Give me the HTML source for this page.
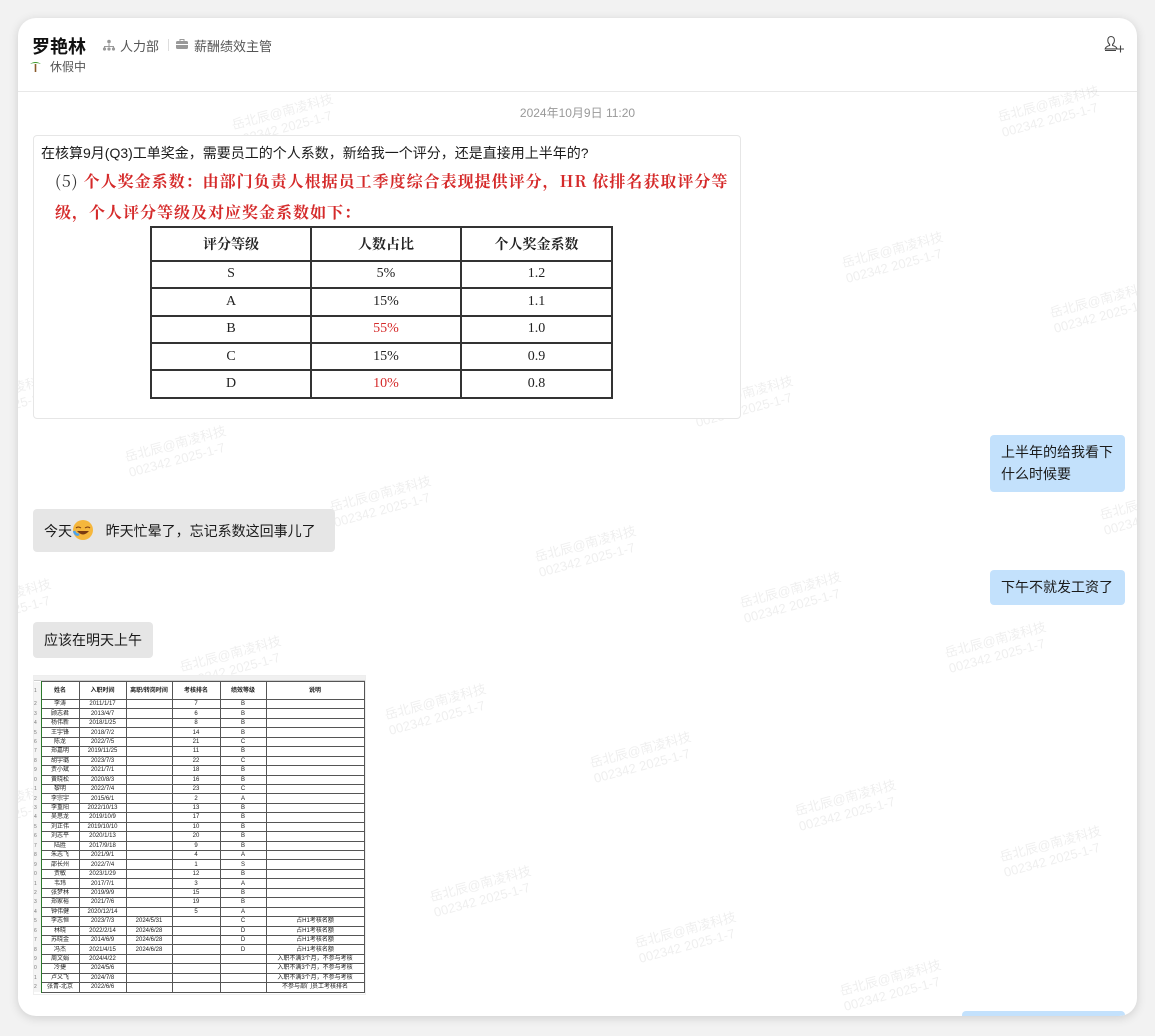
<!DOCTYPE html>
<html><head><meta charset="utf-8"><style>
*{margin:0;padding:0;box-sizing:border-box}
body{width:1155px;height:1036px;background:#f2f2f2;font-family:"Liberation Sans","Noto Sans CJK SC",sans-serif;position:relative;overflow:hidden}
#card{position:absolute;left:18px;top:18px;width:1119px;height:998px;background:#fff;border-radius:18px;box-shadow:0 2px 10px rgba(0,0,0,.15);overflow:hidden}
.abs{position:absolute}
.wm{position:absolute;color:rgba(0,0,0,.065);font-size:13px;line-height:16px;transform:rotate(-15deg);transform-origin:left top;white-space:nowrap}
.bub{position:absolute;font-size:14px;color:#1a1a1a;border-radius:4px;padding:0 11px;line-height:22px}
.g{background:#e6e6e6}.b{background:#c3e1fc}
table.t{border-collapse:collapse;position:absolute;font-family:"Liberation Serif","Noto Serif CJK SC",serif;}
table.t td{border:2px solid #333;text-align:center;font-size:14px;color:#222}
table.x{border-collapse:collapse;table-layout:fixed;font-size:6px;color:#222;position:absolute;left:0;top:0}
table.x td{border:1px solid #555;height:9.45px;line-height:8px;text-align:center;white-space:nowrap;overflow:hidden;padding:0}
table.x td.n{border:none;border-right:1px solid #2a7a2a;color:#777;font-size:5px;text-align:left;background:#f4f4f4}
</style></head><body>
<div id="card">
<div class="abs" style="left:14px;top:15px;font-size:18px;font-weight:bold;color:#111">罗艳林</div>
<svg class="abs" style="left:84px;top:21px" width="14" height="12" viewBox="0 0 14 12"><circle cx="7" cy="2.5" r="1.8" fill="#999"/><path d="M7 4.5v3M2.5 9V7.5h9V9" stroke="#999" fill="none"/><circle cx="2.5" cy="10" r="1.6" fill="#999"/><circle cx="7" cy="10" r="1.6" fill="#999"/><circle cx="11.5" cy="10" r="1.6" fill="#999"/></svg>
<div class="abs" style="left:102px;top:18px;font-size:13px;color:#555">人力部</div>
<div class="abs" style="left:150px;top:21px;width:1px;height:12px;background:#ddd"></div>
<svg class="abs" style="left:157px;top:20px" width="14" height="12" viewBox="0 0 14 12"><rect x="1" y="3" width="12" height="8" rx="1.5" fill="#999"/><path d="M5 3V1.5h4V3" stroke="#999" fill="none"/><rect x="1" y="6" width="12" height="1" fill="#fff"/></svg>
<div class="abs" style="left:176px;top:18px;font-size:13px;color:#555">薪酬绩效主管</div>
<svg class="abs" style="left:12px;top:42px" width="11" height="12" viewBox="0 0 11 12"><path d="M5.5 4v8" stroke="#8a5a2a" stroke-width="1.6"/><path d="M0 4Q5.5 0 11 4Q5.5 2 0 4Z" fill="#3a9a2a"/></svg>
<div class="abs" style="left:32px;top:40px;font-size:12px;color:#555">休假中</div>
<svg class="abs" style="left:1086px;top:17px" width="22" height="18" viewBox="0 0 22 18"><path d="M7 1.5c2.2 0 3.4 1.6 3.4 3.8 0 1.8-.8 3.2-1.8 4v1.2c2.5.6 4 1.6 4.4 3.4H1.2c.4-1.8 1.9-2.8 4.4-3.4V9.3c-1-.8-1.8-2.2-1.8-4C3.8 3.1 5 1.5 7 1.5z" fill="none" stroke="#444" stroke-width="1.1"/><path d="M1 15.5h11" stroke="#444" stroke-width="1.1"/><path d="M16.5 10.5v7M13 14h7" stroke="#444" stroke-width="1.1"/></svg>
<div class="abs" style="left:0;top:73px;width:1119px;height:1px;background:#e8e8e8"></div>

<div class="wm" style="left:212px;top:100px">岳北辰@南凌科技<br>002342 2025-1-7</div>
<div class="wm" style="left:978px;top:92px">岳北辰@南凌科技<br>002342 2025-1-7</div>
<div class="wm" style="left:822px;top:238px">岳北辰@南凌科技<br>002342 2025-1-7</div>
<div class="wm" style="left:1030px;top:288px">岳北辰@南凌科技<br>002342 2025-1-7</div>
<div class="wm" style="left:672px;top:382px">岳北辰@南凌科技<br>002342 2025-1-7</div>
<div class="wm" style="left:105px;top:432px">岳北辰@南凌科技<br>002342 2025-1-7</div>
<div class="wm" style="left:310px;top:482px">岳北辰@南凌科技<br>002342 2025-1-7</div>
<div class="wm" style="left:515px;top:532px">岳北辰@南凌科技<br>002342 2025-1-7</div>
<div class="wm" style="left:720px;top:578px">岳北辰@南凌科技<br>002342 2025-1-7</div>
<div class="wm" style="left:925px;top:628px">岳北辰@南凌科技<br>002342 2025-1-7</div>
<div class="wm" style="left:1080px;top:490px">岳北辰@南凌科技<br>002342 2025-1-7</div>
<div class="wm" style="left:160px;top:642px">岳北辰@南凌科技<br>002342 2025-1-7</div>
<div class="wm" style="left:365px;top:690px">岳北辰@南凌科技<br>002342 2025-1-7</div>
<div class="wm" style="left:570px;top:738px">岳北辰@南凌科技<br>002342 2025-1-7</div>
<div class="wm" style="left:775px;top:786px">岳北辰@南凌科技<br>002342 2025-1-7</div>
<div class="wm" style="left:980px;top:832px">岳北辰@南凌科技<br>002342 2025-1-7</div>
<div class="wm" style="left:410px;top:872px">岳北辰@南凌科技<br>002342 2025-1-7</div>
<div class="wm" style="left:615px;top:918px">岳北辰@南凌科技<br>002342 2025-1-7</div>
<div class="wm" style="left:820px;top:966px">岳北辰@南凌科技<br>002342 2025-1-7</div>
<div class="wm" style="left:-70px;top:380px">岳北辰@南凌科技<br>002342 2025-1-7</div>
<div class="wm" style="left:-70px;top:585px">岳北辰@南凌科技<br>002342 2025-1-7</div>
<div class="wm" style="left:-70px;top:790px">岳北辰@南凌科技<br>002342 2025-1-7</div>

<div class="abs" style="left:0;width:1119px;top:86px;text-align:center;font-size:12px;color:#999">2024年10月9日 11:20</div>

<div class="abs" style="left:15px;top:117px;width:708px;height:284px;border:1px solid #e6e6e6;border-radius:4px;background:#fff">
 <div class="abs" style="left:7px;top:7px;font-size:14px;color:#1a1a1a">在核算9月(Q3)工单奖金，需要员工的个人系数，新给我一个评分，还是直接用上半年的?</div>
 <div class="abs" style="left:21px;top:29px;font-size:16px;color:#d52a2a;font-family:'Noto Serif CJK SC',serif;font-weight:bold;line-height:31px;width:690px;letter-spacing:1px;white-space:nowrap"><span style="color:#333;font-weight:normal">(5)</span> 个人奖金系数：由部门负责人根据员工季度综合表现提供评分，HR 依排名获取评分等<br>级，个人评分等级及对应奖金系数如下：</div>
 <table class="t" style="left:116px;top:90px;width:463px;height:173px">
  <tr><td style="width:160px"><b>评分等级</b></td><td style="width:150px"><b>人数占比</b></td><td><b>个人奖金系数</b></td></tr>
  <tr><td>S</td><td>5%</td><td>1.2</td></tr>
  <tr><td>A</td><td>15%</td><td>1.1</td></tr>
  <tr><td>B</td><td style="color:#d52a2a">55%</td><td>1.0</td></tr>
  <tr><td>C</td><td>15%</td><td>0.9</td></tr>
  <tr><td>D</td><td style="color:#d52a2a">10%</td><td>0.8</td></tr>
 </table>
</div>

<div class="bub b" style="left:972px;top:417px;width:135px;height:57px;padding-top:6px">上半年的给我看下<br>什么时候要</div>
<div class="bub g" style="left:15px;top:491px;width:302px;height:43px;padding-top:10px">今天<svg width="22" height="22" viewBox="0 0 22 22" style="vertical-align:-5px"><circle cx="11" cy="11" r="10" fill="#f6b73c"/><path d="M5 12q6 7 12 0z" fill="#7a3a10"/><path d="M4 9q2-2 5 0M13 9q3-2 5 0" stroke="#7a3a10" fill="none"/><path d="M2 12q2 5 5 3" stroke="#4aa3ef" stroke-width="2.5" fill="none"/></svg>&nbsp;&nbsp;&nbsp;昨天忙晕了，忘记系数这回事儿了</div>
<div class="bub b" style="left:972px;top:552px;width:135px;height:35px;padding-top:6px">下午不就发工资了</div>
<div class="bub g" style="left:15px;top:604px;width:120px;height:36px;padding-top:7px">应该在明天上午</div>
<div class="abs b" style="left:944px;top:993px;width:163px;height:10px;border-radius:4px"></div>

<div class="abs" style="left:15px;top:657px;width:333px;height:320px;background:#fff;overflow:hidden;border:1px solid #eee">
<div style="position:absolute;left:0;top:0;width:333px;height:5px;background:#f0f0f0;border-bottom:1px solid #ccc"></div>
<table class="x" style="top:5px;width:330px">
<colgroup><col style="width:7px"><col style="width:38px"><col style="width:47px"><col style="width:46px"><col style="width:48px"><col style="width:46px"><col style="width:98px"></colgroup>
<tr style="height:18px"><td class="n">1</td><td style="height:18px"><b>姓名</b></td><td><b>入职时间</b></td><td><b>离职/转岗时间</b></td><td><b>考核排名</b></td><td><b>绩效等级</b></td><td style="border-left:1px solid #2a7a2a"><b>说明</b></td></tr>
<tr><td class="n">2</td><td>李涛</td><td>2011/1/17</td><td></td><td>7</td><td>B</td><td></td></tr>
<tr><td class="n">3</td><td>顾志君</td><td>2013/4/7</td><td></td><td>6</td><td>B</td><td></td></tr>
<tr><td class="n">4</td><td>杨伟新</td><td>2018/1/25</td><td></td><td>8</td><td>B</td><td></td></tr>
<tr><td class="n">5</td><td>王宇锋</td><td>2018/7/2</td><td></td><td>14</td><td>B</td><td></td></tr>
<tr><td class="n">6</td><td>陈龙</td><td>2022/7/5</td><td></td><td>21</td><td>C</td><td></td></tr>
<tr><td class="n">7</td><td>郑嘉明</td><td>2019/11/25</td><td></td><td>11</td><td>B</td><td></td></tr>
<tr><td class="n">8</td><td>胡宇璐</td><td>2023/7/3</td><td></td><td>22</td><td>C</td><td></td></tr>
<tr><td class="n">9</td><td>贾小斌</td><td>2021/7/1</td><td></td><td>18</td><td>B</td><td></td></tr>
<tr><td class="n">0</td><td>黄晓松</td><td>2020/8/3</td><td></td><td>16</td><td>B</td><td></td></tr>
<tr><td class="n">1</td><td>黎明</td><td>2022/7/4</td><td></td><td>23</td><td>C</td><td></td></tr>
<tr><td class="n">2</td><td>李宗宇</td><td>2015/6/1</td><td></td><td>2</td><td>A</td><td></td></tr>
<tr><td class="n">3</td><td>李重阳</td><td>2022/10/13</td><td></td><td>13</td><td>B</td><td></td></tr>
<tr><td class="n">4</td><td>吴思龙</td><td>2019/10/9</td><td></td><td>17</td><td>B</td><td></td></tr>
<tr><td class="n">5</td><td>刘正伟</td><td>2019/10/10</td><td></td><td>10</td><td>B</td><td></td></tr>
<tr><td class="n">6</td><td>刘志平</td><td>2020/1/13</td><td></td><td>20</td><td>B</td><td></td></tr>
<tr><td class="n">7</td><td>陆胜</td><td>2017/9/18</td><td></td><td>9</td><td>B</td><td></td></tr>
<tr><td class="n">8</td><td>朱志飞</td><td>2021/9/1</td><td></td><td>4</td><td>A</td><td></td></tr>
<tr><td class="n">9</td><td>邵长州</td><td>2022/7/4</td><td></td><td>1</td><td>S</td><td></td></tr>
<tr><td class="n">0</td><td>贾敏</td><td>2023/1/29</td><td></td><td>12</td><td>B</td><td></td></tr>
<tr><td class="n">1</td><td>韦玮</td><td>2017/7/1</td><td></td><td>3</td><td>A</td><td></td></tr>
<tr><td class="n">2</td><td>张梦林</td><td>2019/9/9</td><td></td><td>15</td><td>B</td><td></td></tr>
<tr><td class="n">3</td><td>郑家裕</td><td>2021/7/6</td><td></td><td>19</td><td>B</td><td></td></tr>
<tr><td class="n">4</td><td>钟伟健</td><td>2020/12/14</td><td></td><td>5</td><td>A</td><td></td></tr>
<tr><td class="n">5</td><td>李志恒</td><td>2023/7/3</td><td>2024/5/31</td><td></td><td>C</td><td>占H1考核名额</td></tr>
<tr><td class="n">6</td><td>林晓</td><td>2022/2/14</td><td>2024/6/28</td><td></td><td>D</td><td>占H1考核名额</td></tr>
<tr><td class="n">7</td><td>苏晓金</td><td>2014/6/9</td><td>2024/6/28</td><td></td><td>D</td><td>占H1考核名额</td></tr>
<tr><td class="n">8</td><td>冯杰</td><td>2021/4/15</td><td>2024/6/28</td><td></td><td>D</td><td>占H1考核名额</td></tr>
<tr><td class="n">9</td><td>周文娟</td><td>2024/4/22</td><td></td><td></td><td></td><td>入职不满3个月，不参与考核</td></tr>
<tr><td class="n">0</td><td>冷捷</td><td>2024/5/6</td><td></td><td></td><td></td><td>入职不满3个月，不参与考核</td></tr>
<tr><td class="n">1</td><td>卢义飞</td><td>2024/7/8</td><td></td><td></td><td></td><td>入职不满3个月，不参与考核</td></tr>
<tr><td class="n">2</td><td>张青-北京</td><td>2022/6/6</td><td></td><td></td><td></td><td>不参与部门员工考核排名</td></tr>
</table>
</div>
</div>
</body></html>
